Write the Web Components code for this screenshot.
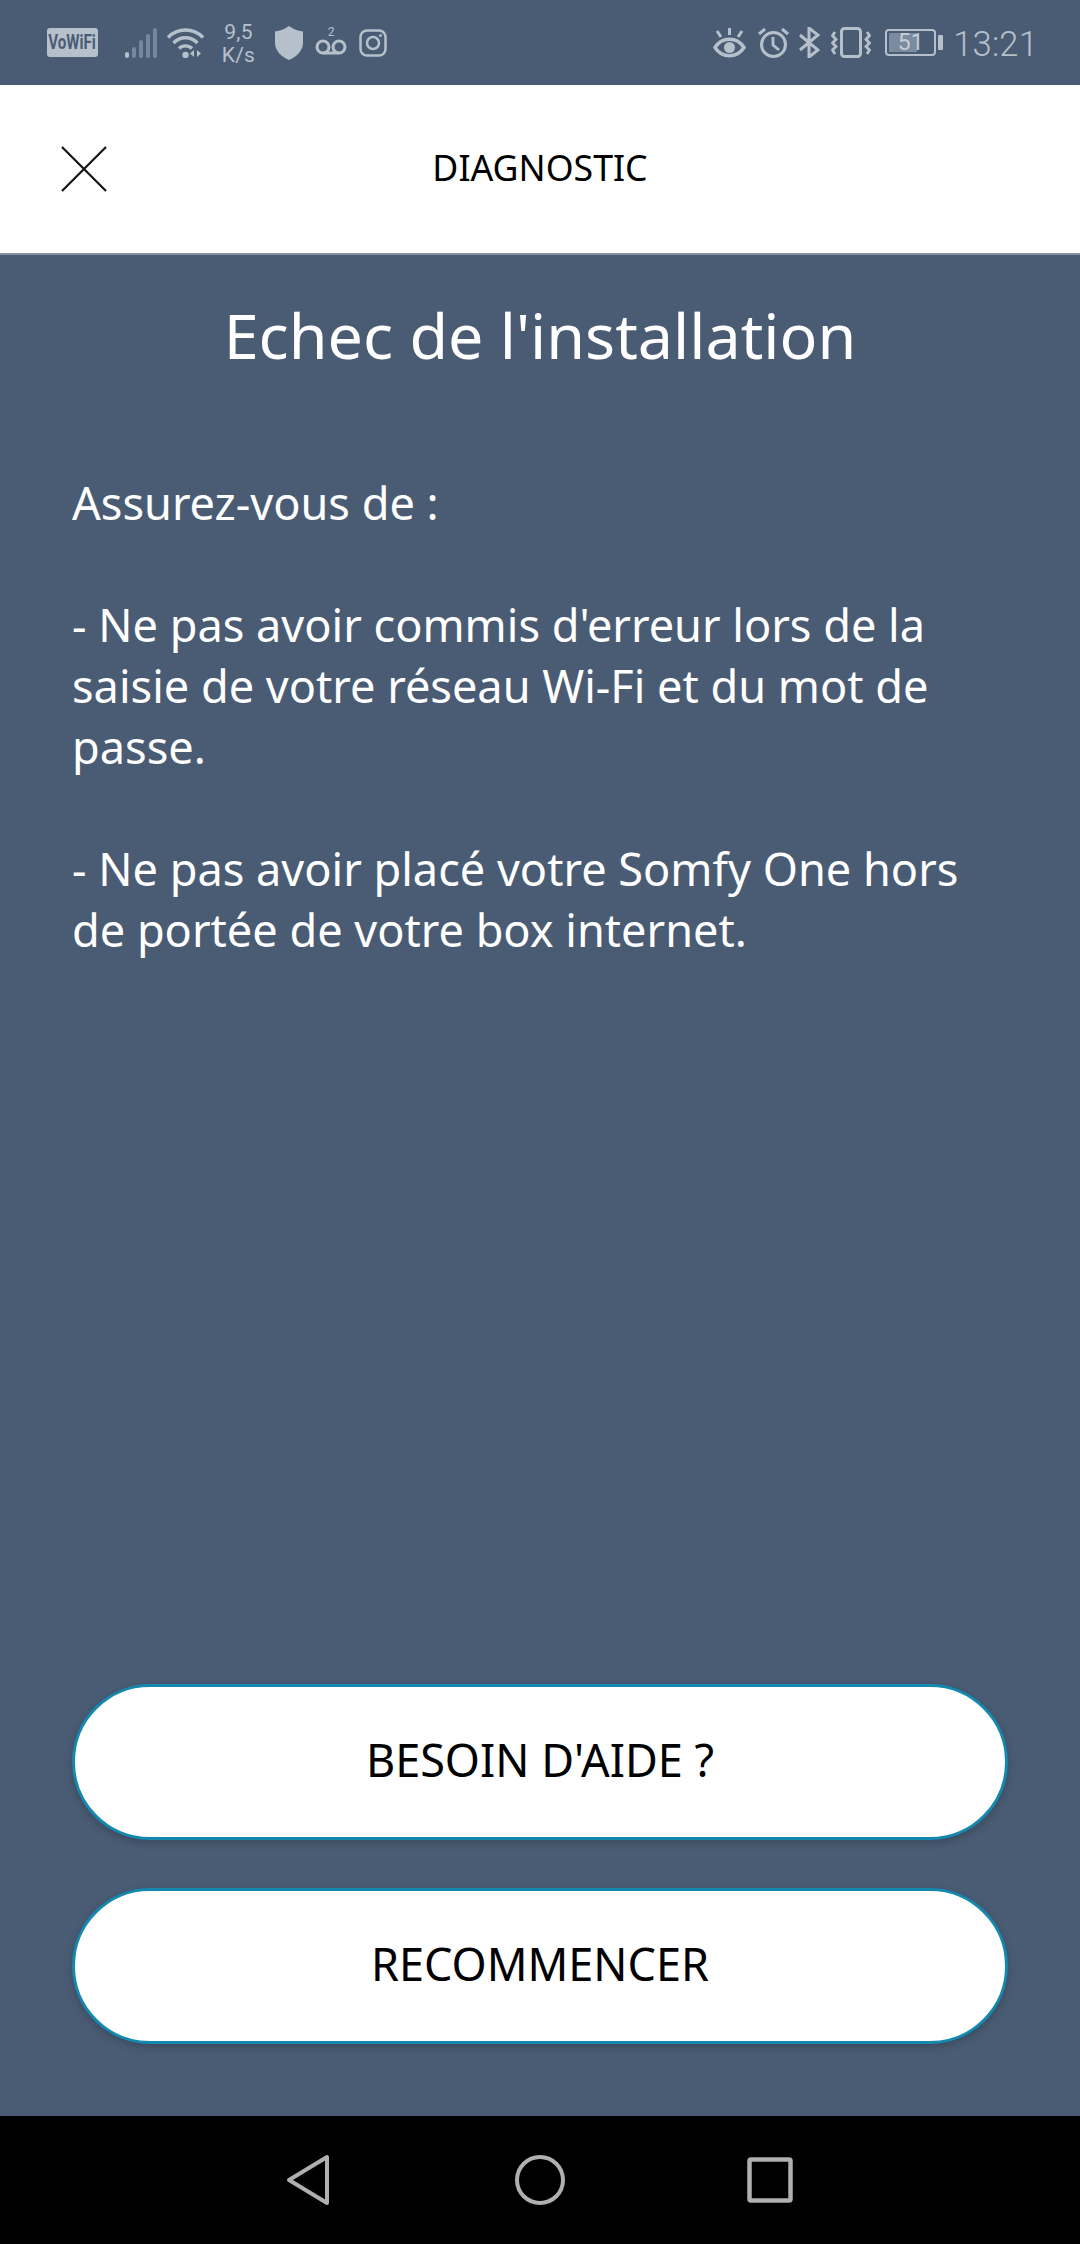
<!DOCTYPE html>
<html lang="fr"><head><meta charset="utf-8"><title>Diagnostic</title>
<style>
html,body{margin:0;padding:0;height:100%}
body{background:#4a5c74;font-family:"Noto Sans","Open Sans",sans-serif}
</style></head><body>
<diag-app>
<status-bar></status-bar>
<app-header>DIAGNOSTIC</app-header>
<diag-main>
<h1 slot="title">Echec de l'installation</h1>
<p>Assurez-vous de :</p>
<p>- Ne pas avoir commis d'erreur lors de la saisie de votre réseau Wi-Fi et du mot de passe.</p>
<p>- Ne pas avoir placé votre Somfy One hors de portée de votre box internet.</p>
<pill-button slot="actions">BESOIN D'AIDE ?</pill-button>
<pill-button slot="actions">RECOMMENCER</pill-button>
</diag-main>
<nav-bar></nav-bar>
</diag-app>
<script>
function def(name,html){
  customElements.define(name,class extends HTMLElement{
    constructor(){super();this.attachShadow({mode:'open'}).innerHTML=html;}
  });
}
def('diag-app',`<style>:host{display:flex;flex-direction:column;width:1080px;height:2244px;overflow:hidden}</style><slot></slot>`);
const C='#b6c0cb';
def('status-bar',`<style>
:host{display:flex;align-items:center;height:85px;flex:none;background:#4a5c74;color:${C};font-family:Roboto,"Noto Sans",sans-serif}
svg{display:block;flex:none}
.sp{display:flex;flex-direction:column;align-items:center;font-size:21px;line-height:23px;width:33px;margin-left:18px;letter-spacing:.2px;position:relative;top:1px}
.t{font-size:34.500px;margin-left:10px;line-height:40px;font-weight:300;letter-spacing:.2px;position:relative;top:1px}
.vo{flex:none;width:51px;height:29px;background:${C};border-radius:3px;margin-left:47px;display:flex;align-items:center;justify-content:center;color:#4a5c74;font:700 21px/29px Roboto,sans-serif;white-space:nowrap}
.vo span{display:inline-block;transform:scaleX(.72)}
.vm{margin-left:12px;width:32px;height:30px;position:relative;top:-1px;flex:none}
.vm b{position:absolute;left:0;right:0;top:-2px;text-align:center;font:400 12px/14px Roboto,sans-serif}
.grow{flex:1}
.b{width:51px;height:27px;border:2px solid ${C};box-sizing:border-box;border-radius:4px;margin-left:14px;position:relative;font-size:23px;line-height:23px;display:flex;justify-content:center;overflow:hidden;padding-left:1px}
.b i{position:absolute;left:2px;top:2px;bottom:2px;width:28px;background:#7b8ba0;border-radius:1px}
.b span{position:relative;font-weight:400;margin-left:-1px;line-height:23px;color:#c4ccd5}
.n{width:5px;height:15px;background:${C};border-radius:1px;margin-left:2px}
</style>
<div class="vo"><span>VoWiFi</span></div>
<svg style="margin-left:27px" width="33" height="30" viewBox="0 0 33 30"><g fill="#75879c"><rect x="7" y="19" width="4" height="11" rx="2"/><rect x="14" y="12" width="4" height="18" rx="2"/><rect x="21" y="6" width="4" height="24" rx="2"/><rect x="28" y="0" width="4" height="30" rx="2"/></g><rect x="0" y="24" width="4" height="6" rx="2" fill="${C}"/></svg>
<svg style="margin-left:9px" width="37" height="30" viewBox="0 0 37 30" fill="none" stroke="${C}" stroke-width="3.400"><path d="M1 9.500C10.500 -.5 26.500 -.5 36 9.500"/><path d="M6.500 15C13 8 24 8 30.500 15"/><path d="M12 20.500C15.500 17 21.500 17 25 20.500"/><circle cx="18.500" cy="27" r="3.200" fill="${C}" stroke="none"/><path d="M27 22v7l-4-3.500zM30 22v7l4-3.500z" fill="${C}" stroke="none"/></svg>
<div class="sp"><span>9,5</span><span>K/s</span></div>
<svg style="margin-left:20px" width="28" height="34" viewBox="0 0 28 34"><path d="M14 0C18 3 23 5 28 5.500V17C28 25 21 31 14 34C7 31 0 25 0 17V5.500C5 5 10 3 14 0Z" fill="${C}"/></svg>
<div class="vm"><svg width="32" height="30" viewBox="0 0 32 30" fill="none" stroke="${C}" stroke-width="3"><circle cx="8" cy="20" r="6"/><circle cx="24" cy="20" r="6"/><path d="M8 26H24"/></svg><b>2</b></div>
<svg style="margin-left:12px" width="28" height="28" viewBox="0 0 28 28" fill="none" stroke="${C}" stroke-width="2.500"><rect x="1.500" y="1.500" width="25" height="25" rx="6.500"/><circle cx="14" cy="14" r="6"/><circle cx="21.500" cy="6.500" r="1.500" fill="${C}" stroke="none"/></svg>
<div class="grow"></div>
<svg width="33" height="30" viewBox="0 0 33 30" fill="none" stroke="${C}" stroke-width="3.500"><path d="M2 19.500C9 8.500 24 8.500 31 19.500C24 30.500 9 30.500 2 19.500Z"/><circle cx="16.500" cy="19.500" r="5.500" fill="${C}" stroke="none"/><path d="M16.500 0V7M4 3L8 9M29 3L25 9" stroke-width="3"/></svg>
<svg style="margin-left:12px" width="31" height="31" viewBox="0 0 31 31" fill="none" stroke="${C}" stroke-width="3"><circle cx="15.500" cy="17.500" r="12"/><path d="M15 10V18L21 23" stroke-width="2.800"/><path d="M1 7L7 2M30 7L24 2" stroke-width="3"/></svg>
<svg style="margin-left:10px" width="21" height="31" viewBox="0 0 21 31" fill="none" stroke="${C}" stroke-width="3"><path d="M1 8L19 23L10 30V1L19 8L1 23"/></svg>
<svg style="margin-left:11px" width="40" height="31" viewBox="0 0 40 31" fill="none" stroke="${C}" stroke-width="3"><rect x="10.500" y="1.500" width="19" height="28" rx="3"/><path d="M4 5L1.500 8.500L5 12.500L1.500 16L5 19.500L1.500 23L4 27" stroke-width="2.800"/><path d="M36 5L38.500 8.500L35 12.500L38.500 16L35 19.500L38.500 23L36 27" stroke-width="2.800"/></svg>
<div class="b"><i></i><span>51</span></div><div class="n"></div>
<div class="t">13:21</div>
<div style="width:42px;flex:none"></div>
`);
def('app-header',`<style>
:host{display:flex;align-items:center;justify-content:center;position:relative;height:168px;flex:none;background:#fff;border-bottom:2px solid #8593a3;color:#000;font-size:35.700px}
span{position:relative;top:-2px}
svg{position:absolute;left:61px;top:61px}
</style><svg width="46" height="46" viewBox="0 0 46 46" fill="none" stroke="#111" stroke-width="2.200"><path d="M1 1L45 45M45 1L1 45"/></svg><span><slot></slot></span>`);
def('diag-main',`<style>
:host{display:flex;flex-direction:column;flex:1;min-height:0;padding:0 72px 72px;color:#fff}
.title{display:block;text-align:center;padding-top:38px;margin-bottom:95px}
::slotted(h1){margin:0;font-weight:400;font-size:62.800px;line-height:84px}
::slotted(p){margin:0 0 61px;font-size:45.100px;line-height:61px;width:930px}
.actions{display:flex;flex-direction:column;gap:48px;flex:none;margin-top:auto}
</style><div class="title"><slot name="title"></slot></div><slot></slot><div class="actions"><slot name="actions"></slot></div>`);
def('pill-button',`<style>
:host{display:flex;align-items:center;justify-content:center;box-sizing:border-box;height:156px;border:3px solid #1488ae;border-radius:78px;background:#fff;color:#000;font-size:45px;padding-bottom:6px;box-shadow:0 3px 8px rgba(0,0,0,.22)}
</style><slot></slot>`);
def('nav-bar',`<style>
:host{display:flex;align-items:center;justify-content:center;height:128px;flex:none;background:#000;padding-right:2px}
svg{display:block;flex:none}
</style>
<svg style="margin-right:185px" width="44" height="52" viewBox="0 0 44 52" fill="none" stroke="#b0b0b0" stroke-width="4" stroke-linejoin="round"><path d="M3 26L41 3V49Z"/></svg>
<svg style="margin-right:182px" width="50" height="50" viewBox="0 0 50 50" fill="none" stroke="#b0b0b0" stroke-width="4"><circle cx="25" cy="25" r="23"/></svg>
<svg width="46" height="46" viewBox="0 0 46 46" fill="none" stroke="#b0b0b0" stroke-width="4.500" stroke-linejoin="round"><rect x="2.500" y="2.500" width="41" height="41" rx="1.500"/></svg>`);
</script>
</body></html>
